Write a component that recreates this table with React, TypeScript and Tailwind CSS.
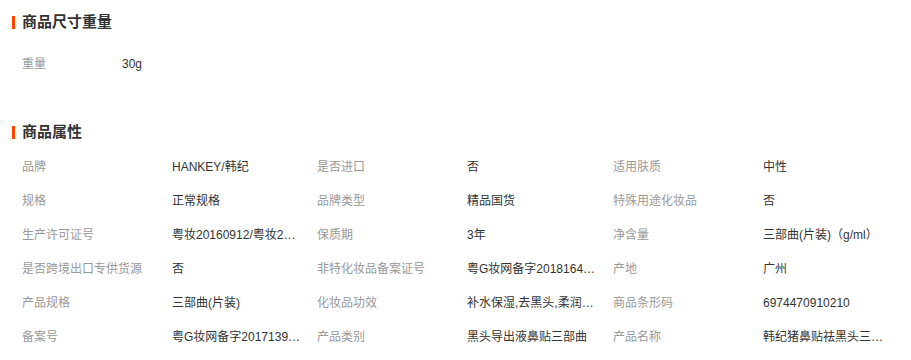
import React from "react";

type Attr = { label: string; value: string };

const attrs: Attr[] = [
  { label: "品牌", value: "HANKEY/韩纪" },
  { label: "是否进口", value: "否" },
  { label: "适用肤质", value: "中性" },
  { label: "规格", value: "正常规格" },
  { label: "品牌类型", value: "精品国货" },
  { label: "特殊用途化妆品", value: "否" },
  { label: "生产许可证号", value: "粤妆20160912/粤妆20160913" },
  { label: "保质期", value: "3年" },
  { label: "净含量", value: "三部曲(片装)（g/ml）" },
  { label: "是否跨境出口专供货源", value: "否" },
  { label: "非特化妆品备案证号", value: "粤G妆网备字2018164523" },
  { label: "产地", value: "广州" },
  { label: "产品规格", value: "三部曲(片装)" },
  { label: "化妆品功效", value: "补水保湿,去黑头,柔润肌肤" },
  { label: "商品条形码", value: "6974470910210" },
  { label: "备案号", value: "粤G妆网备字2017139856" },
  { label: "产品类别", value: "黑头导出液鼻贴三部曲" },
  { label: "产品名称", value: "韩纪猪鼻贴祛黑头三部曲套装" },
];

const SectionTitle = ({ title }: { title: string }) => (
  <div className="flex h-5 items-center">
    <span className="h-[13px] w-[3px] bg-[#ff4400]" />
    <h3 className="ml-[7px] text-[15px] leading-5 font-bold text-[#333]">{title}</h3>
  </div>
);

export default function App() {
  return (
    <div
      className="h-[360px] w-[911px] overflow-hidden bg-white pl-3"
      style={{ fontFamily: '"Liberation Sans", Arial, "Noto Sans CJK SC", sans-serif' }}
    >
      <div className="pt-3">
        <SectionTitle title="商品尺寸重量" />
        <div className="mt-[15px] flex h-[34px] items-center pl-[10px] text-xs">
          <span className="w-[100px] text-[#999]">重量</span>
          <span className="text-[#333]">30g</span>
        </div>
      </div>

      <div className="mt-[41px]">
        <SectionTitle title="商品属性" />
        <div className="mt-[8px] grid grid-cols-[150px_145px_150px_146px_150px_145px] pl-[10px] text-xs">
          {attrs.map((a) => (
            <React.Fragment key={a.label}>
              <div className="flex h-[34px] items-center whitespace-nowrap text-[#999]">{a.label}</div>
              <div className="flex h-[34px] min-w-0 items-center text-[#333]">
                <span className="block max-w-[130px] truncate">{a.value}</span>
              </div>
            </React.Fragment>
          ))}
        </div>
      </div>
    </div>
  );
}
